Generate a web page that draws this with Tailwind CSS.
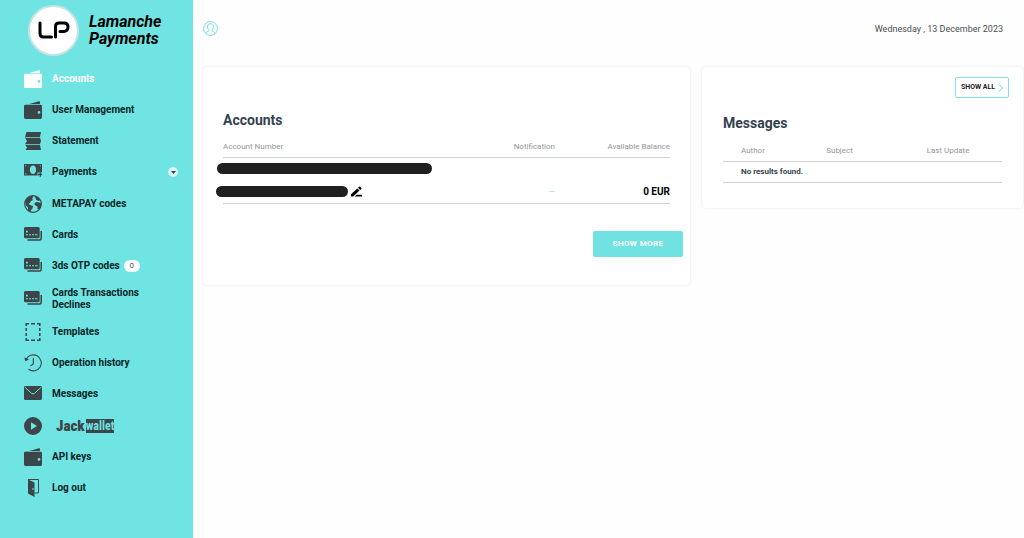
<!DOCTYPE html>
<html lang="en">
<head>
    <meta charset="UTF-8">
    <meta name="viewport" content="width=device-width, initial-scale=1.0">
    <title>Lamanche Payments</title>
    <script src="https://cdn.jsdelivr.net/npm/@tailwindcss/browser@4"></script>
</head>
<body class="bg-[#fefefe] font-['Roboto',sans-serif] flex min-h-screen">
    <!-- Shared icons -->
    <svg class="hidden">
        <symbol id="wallet" viewBox="0 0 18 18">
            <path d="M1 4.2 14.8.2q1.2-.3 1.2 1V3H5z"/>
            <path fill-rule="evenodd" d="M1.4 3.8H16.6Q18 3.8 18 5.2V16.6Q18 18 16.6 18H1.4Q0 18 0 16.6V5.2Q0 3.8 1.4 3.8zM15 10a1.4 1.4 0 1 0 0 2.8 1.4 1.4 0 0 0 0-2.8z"/>
        </symbol>
        <symbol id="cards" viewBox="0 0 18 18">
            <path d="M17.200 5V12.500q0 1.500-1.500 1.500H3.500" fill="none" stroke="currentColor" stroke-width="1.500"/>
            <path fill-rule="evenodd" d="M1.500 1H14.200Q15.700 1 15.700 2.500V10.800Q15.700 12.300 14.200 12.300H1.500Q0 12.300 0 10.800V2.500Q0 1 1.500 1zM2 4.800V6.400H3.800V4.800zM2 8.300v1h2v-1zM5 8.300v1h2v-1zM8 8.300v1h2v-1zM11 8.300v1h2.500v-1z"/>
        </symbol>
    </svg>

    <!-- Sidebar -->
    <aside class="w-[193px] shrink-0 bg-[#70e4e3] flex flex-col pb-[34px]">
        <a href="#" class="flex items-center gap-[10px] pt-[4px] pl-[28px] h-[63px] pb-[7px] text-black">
            <span class="size-[51px] shrink-0 rounded-full bg-white border-2 border-[#c9e3e3] flex items-center justify-center">
                <svg class="w-[32px] h-[18px]" viewBox="0 0 32 18" fill="none" stroke="currentColor" stroke-width="3" stroke-linecap="round" stroke-linejoin="round" role="img" aria-label="LP">
                    <path d="M2 2V12.500q0 3.500 3.500 3.500H13.500"/>
                    <path d="M17.500 16V5.500Q17.500 2 21 2H26Q30 2 30 6T26 10.500H22"/>
                </svg>
            </span>
            <span class="font-bold italic text-[16px] leading-[17px]">Lamanche<br>Payments</span>
        </a>
        <nav class="flex-1 flex">
            <ul class="flex-1 flex flex-col justify-between text-[10px] leading-[12px] font-bold text-[#062425] fill-[#3a4648]">
                <li><a href="#" class="flex items-center gap-[10px] pl-[24px] h-[31px] text-white">
                    <svg class="size-[18px] shrink-0 fill-white"><use href="#wallet"/></svg>Accounts</a></li>
                <li><a href="#" class="flex items-center gap-[10px] pl-[24px] h-[31px]">
                    <svg class="size-[18px] shrink-0"><use href="#wallet"/></svg>User Management</a></li>
                <li><a href="#" class="flex items-center gap-[10px] pl-[24px] h-[31px]">
                    <svg class="size-[18px] shrink-0" viewBox="0 0 18 18">
                        <path d="M2.500 0H17L16 5H1zM1 5.700H16L17 9 16 12H1L3 9zM1 12.700H16L17 18H1.500L3 15.500z"/>
                    </svg>Statement</a></li>
                <li class="flex items-center justify-between pr-[15px]"><a href="#" class="flex items-center gap-[10px] pl-[24px] h-[31px]">
                    <svg class="size-[18px] shrink-0" viewBox="0 0 18 18">
                        <path fill-rule="evenodd" d="M0 1H18V9.500H15.500V12.500H0zM9 2.600C7 2.600 5.900 4.300 5.900 6.700S7 11 9 11 12.100 9.100 12.100 6.700 11 2.600 9 2.600zM1.300 2.300v1.400l1.400-1.400zM16.700 2.300v1.400l-1.400-1.400zM1.300 11.200V9.800l1.400 1.400z"/>
                        <path d="M13.500 9.500H18V14.500H13.500z" fill="#70e4e3"/>
                        <path d="M16.300 9.200v4.600M13.800 11.500H18" stroke="#3a4648" stroke-width="1.300"/>
                    </svg>Payments</a>
                    <button type="button" aria-label="Expand Payments" class="size-[10px] rounded-full bg-[#d3f7f7] flex items-center justify-center">
                        <svg class="w-[5px] h-[3px]" viewBox="0 0 5 3"><path d="M0 0H5L2.500 3z"/></svg>
                    </button></li>
                <li><a href="#" class="flex items-center gap-[10px] pl-[24px] h-[31px]">
                    <svg class="size-[18px] shrink-0" viewBox="0 0 18 18">
                        <circle cx="9" cy="9" r="8.300" fill="none" stroke="#3a4648" stroke-width="1.200"/>
                        <path d="M1 6Q3 1.500 8 .7L9.500 2 8 3.500 9 5 6.500 6.500 6 8 4.500 8.500 6 10 9 11 8.500 13.500 7 15 6.500 17 4 15.500 4 12.500 2 10.500zM11 1Q15 2 16.500 5L14.500 6 12.500 5 11.500 3.500zM11 7.500 14 7 17.300 8.500Q17.500 12 15.500 14.500L13.500 14 13.500 11.500 11.500 10.500 10.300 9z"/>
                    </svg>METAPAY codes</a></li>
                <li><a href="#" class="flex items-center gap-[10px] pl-[24px] h-[31px]">
                    <svg class="size-[18px] shrink-0 text-[#3a4648]"><use href="#cards"/></svg>Cards</a></li>
                <li><a href="#" class="flex items-center gap-[10px] pl-[24px] h-[31px]">
                    <svg class="size-[18px] shrink-0 text-[#3a4648]"><use href="#cards"/></svg>
                    <span class="flex items-center gap-[4px]">3ds OTP codes
                        <span class="w-[16px] h-[12px] rounded-full bg-white text-[#4a5560] text-[8px] font-normal flex items-center justify-center">0</span>
                    </span></a></li>
                <li><a href="#" class="flex items-center gap-[10px] pl-[24px] h-[34px]">
                    <svg class="size-[18px] shrink-0 text-[#3a4648]"><use href="#cards"/></svg>
                    <span>Cards Transactions<br>Declines</span></a></li>
                <li><a href="#" class="flex items-center gap-[10px] pl-[24px] h-[31px]">
                    <svg class="size-[18px] shrink-0" viewBox="0 0 18 18" fill="none" stroke="#3a4648" stroke-width="1.500">
                        <path d="M2.200 3V.8H5M7 .8h4M13 .8h2.800V3M15.800 5v3M15.800 10v3M15.800 15v2.200H13M11 17.200H7M5 17.200H2.200V15M2.200 13v-3M2.200 8V5"/>
                    </svg>Templates</a></li>
                <li><a href="#" class="flex items-center gap-[10px] pl-[24px] h-[31px]">
                    <svg class="size-[18px] shrink-0" viewBox="0 0 18 18" fill="none" stroke="#3a4648" stroke-width="1.100">
                        <path d="M2 5.500A8 8 0 1 1 4.500 15.300M9.300 4V10L6.500 12"/>
                        <path d="M.3 3.500 1.300 7.300 5 5.500z" fill="#3a4648" stroke="none"/>
                    </svg>Operation history</a></li>
                <li><a href="#" class="flex items-center gap-[10px] pl-[24px] h-[31px]">
                    <svg class="size-[18px] shrink-0" viewBox="0 0 18 18">
                        <rect y="1" width="18" height="14" rx="1.500"/>
                        <path d="M1.200 2.500 7.500 8.300Q9 9.600 10.500 8.300L16.800 2.500" fill="none" stroke="#70e4e3" stroke-width="1"/>
                    </svg>Messages</a></li>
                <li><a href="#" class="flex items-center gap-[14px] pl-[24px] h-[31px]">
                    <svg class="size-[18px] shrink-0" viewBox="0 0 18 18">
                        <path fill-rule="evenodd" d="M9 0a9 9 0 1 0 0 18A9 9 0 0 0 9 0zM7 5.200 13 9 7 12.800z"/>
                    </svg>
                    <span class="flex items-center gap-px font-['Roboto_Condensed','Roboto',sans-serif] text-[#3a4648]">
                        <span class="text-[15px] leading-[14px] font-black">Jack</span>
                        <span class="bg-[#3a4648] text-[#70e4e3] text-[12px] h-[14px] leading-[14px]">wallet</span>
                    </span></a></li>
                <li><a href="#" class="flex items-center gap-[10px] pl-[24px] h-[31px]">
                    <svg class="size-[18px] shrink-0"><use href="#wallet"/></svg>API keys</a></li>
                <li><a href="#" class="flex items-center gap-[10px] pl-[24px] h-[31px]">
                    <svg class="size-[18px] shrink-0" viewBox="0 0 18 18">
                        <path d="M4 .5H14.500V14H10.500" fill="none" stroke="#3a4648"/>
                        <path fill-rule="evenodd" d="M4 .5 10.500 3.500V18L4 14.500zM8.500 9v2h1V9z"/>
                    </svg>Log out</a></li>
            </ul>
        </nav>
    </aside>

    <main class="flex-1 pl-[10px] pr-px">
        <header class="h-[67px] flex items-center justify-between pr-[20px] pb-[10px]">
            <button type="button" aria-label="Profile">
                <svg class="size-[15px]" viewBox="0 0 16 16" fill="none" stroke="#70dfe2" stroke-width="1">
                    <circle cx="8" cy="8" r="7.400"/>
                    <path d="M3 13.300Q3.300 11.500 6.300 10.600V9.400Q4.800 8 4.800 5.700 4.800 2.800 8 2.800T11.200 5.700Q11.200 8 9.700 9.400V10.600Q12.700 11.500 13 13.300"/>
                </svg>
            </button>
            <time datetime="2023-12-13" class="text-[9px] leading-[12px] text-[#4b4f54]">Wednesday , 13 December 2023</time>
        </header>

        <div class="grid grid-cols-[487fr_321fr] gap-[12px] items-start">
            <!-- Accounts -->
            <section class="bg-white rounded-[4px] shadow-[0_0_3px_rgba(0,0,0,0.1)] pt-[44px] pb-[28px]">
                <div class="px-[20px]">
                    <h2 class="text-[14px] leading-[18px] font-bold text-[#34424f]">Accounts</h2>
                    <table class="w-full mt-[8px] text-[8px] leading-[12px]">
                        <thead>
                            <tr class="h-[20px] border-b border-[#cfd2d4] text-[#92979c]">
                                <th class="text-left font-normal">Account Number</th>
                                <th class="text-right font-normal w-[115px]">Notification</th>
                                <th class="text-right font-normal w-[115px]">Available Balance</th>
                            </tr>
                        </thead>
                        <tbody>
                            <tr class="h-[46px] border-b border-[#cfd2d4]">
                                <td>
                                    <div class="-ml-[7px] flex flex-col gap-[12px]">
                                        <div class="w-[215px] h-[11px] rounded-full bg-[#202020] ml-px"></div>
                                        <div class="flex items-center gap-[3px]">
                                            <div class="w-[132px] h-[11px] rounded-full bg-[#202020]"></div>
                                            <button type="button" aria-label="Edit">
                                                <svg class="size-[11px]" viewBox="0 0 11 11"><path d="M0 8.300 6.300 2.500 8.500 4.500 2.300 10.500H0zM7 1.800 8.200.7Q8.700.3 9.300.8L10.400 1.900Q10.800 2.400 10.300 2.900L9.200 3.900zM5.500 8.800H11V10.500H3.800z"/></svg>
                                            </button>
                                        </div>
                                    </div>
                                </td>
                                <td class="text-right align-bottom pb-[5px] text-[#7fd8d0]">—</td>
                                <td class="text-right align-bottom pb-[5px] text-[10px] font-bold text-black">0 EUR</td>
                            </tr>
                        </tbody>
                    </table>
                </div>
                <div class="flex justify-end mt-[27px] pr-[7px]">
                    <button type="button" class="w-[90px] h-[26px] rounded-[2px] bg-[#6fe2e1] text-white text-[8px] font-bold tracking-wider">SHOW MORE</button>
                </div>
            </section>

            <!-- Messages -->
            <section class="bg-white rounded-[4px] shadow-[0_0_3px_rgba(0,0,0,0.1)] pt-[10px] pb-[25px]">
                <div class="flex justify-end pr-[14px]">
                    <button type="button" class="w-[54px] h-[21px] rounded-[2px] border border-[#85e2e3] flex items-center justify-center gap-[3px] text-[7px] font-bold text-[#222]">SHOW ALL
                        <svg class="w-[5px] h-[8px]" viewBox="0 0 5 8" fill="none" stroke="#70dfe2"><path d="M.5.500 4.500 4 .5 7.500"/></svg>
                    </button>
                </div>
                <div class="px-[21px] mt-[16px]">
                    <h2 class="text-[14px] leading-[18px] font-bold text-[#34424f]">Messages</h2>
                    <table class="w-full mt-[9px] text-[8px] leading-[12px] text-left">
                        <thead>
                            <tr class="h-[20px] border-b border-[#cfd2d4] text-[#92979c]">
                                <th class="font-normal pl-[18px] w-[37%]">Author</th>
                                <th class="font-normal w-[36%]">Subject</th>
                                <th class="font-normal">Last Update</th>
                            </tr>
                        </thead>
                        <tbody>
                            <tr class="h-[21px] border-b border-[#cfd2d4]">
                                <td colspan="3" class="pl-[18px] font-bold text-[#39444e]">No results found.</td>
                            </tr>
                        </tbody>
                    </table>
                </div>
            </section>
        </div>
    </main>
</body>
</html>
